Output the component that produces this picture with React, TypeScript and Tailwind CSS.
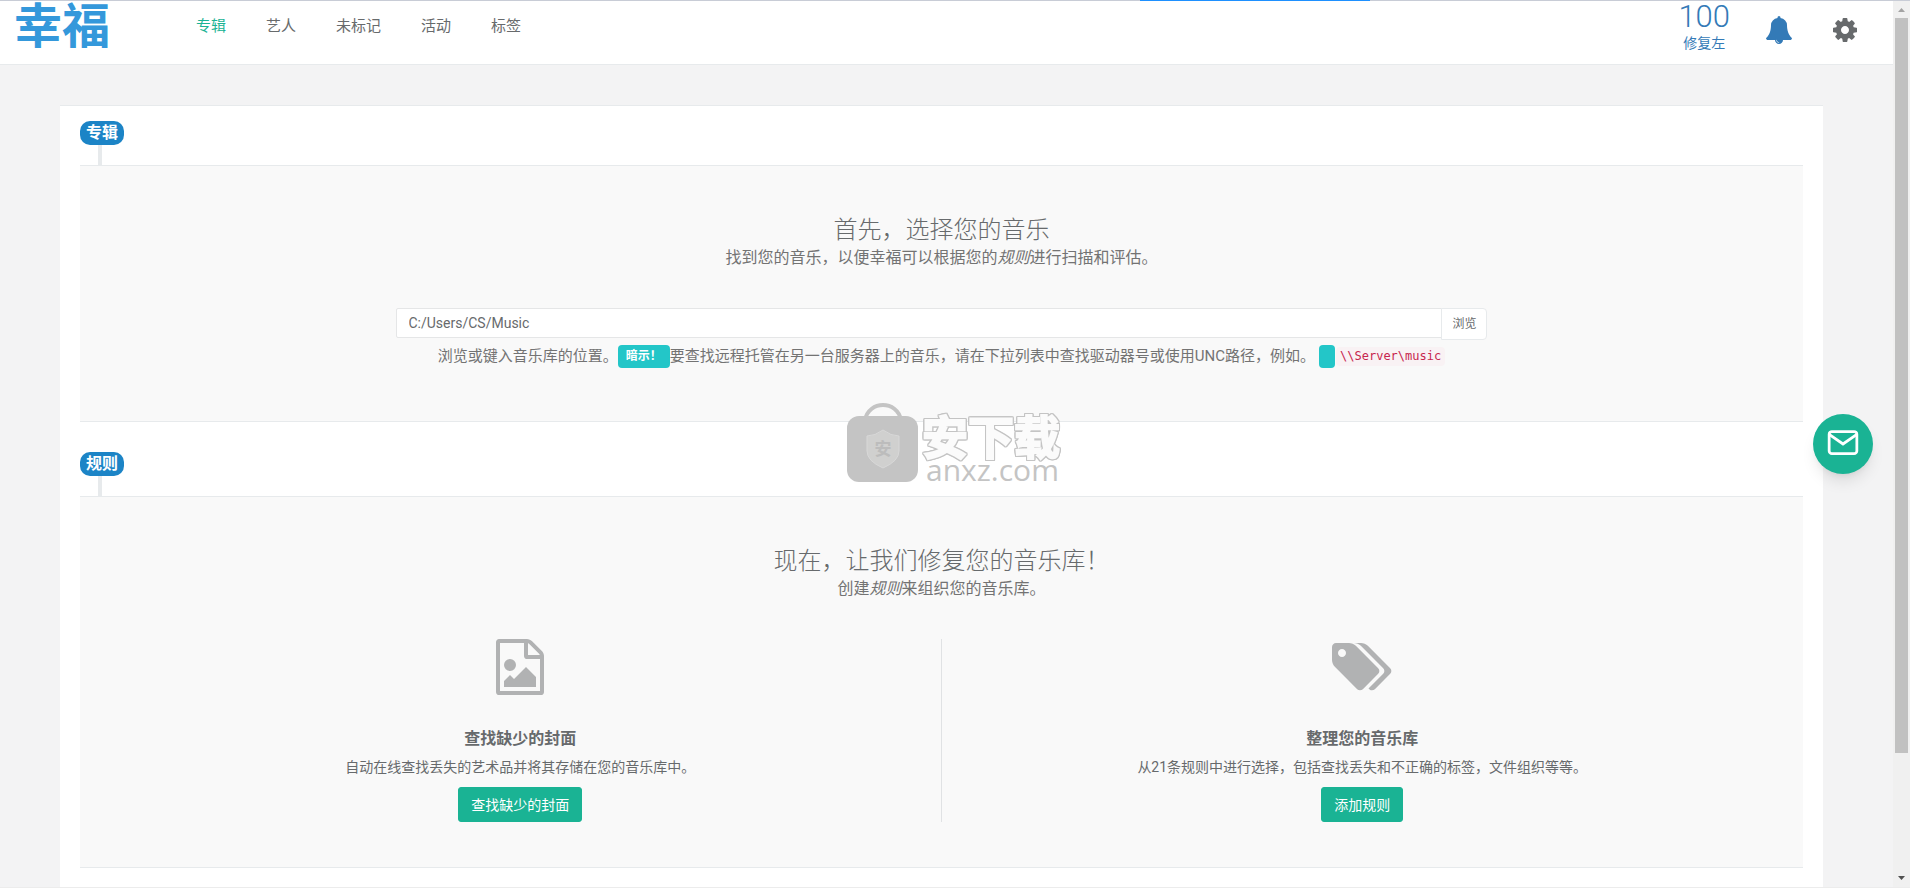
import type { ReactNode } from "react";
import clsx from "clsx";

const NAV = ["专辑", "艺人", "未标记", "活动", "标签"];

function BellIcon() {
  return (
    <svg viewBox="0 0 1792 1792" className="size-7" fill="currentColor" aria-hidden>
      <path d="M912 1696q0-16-16-16-59 0-101.5-42.5t-42.5-101.5q0-16-16-16t-16 16q0 73 51.5 124.5t124.5 51.5q16 0 16-16zm816-288q0 52-38 90t-90 38h-448q0 106-75 181t-181 75-181-75-75-181h-448q-52 0-90-38t-38-90q50-42 91-88t85-119.5 74.5-158.5 50-206 19.5-260q0-152 117-282.5t307-158.5q-8-19-8-39 0-40 28-68t68-28 68 28 28 68q0 20-8 39 190 28 307 158.5t117 282.5q0 139 19.5 260t50 206 74.5 158.5 85 119.5 91 88z" />
    </svg>
  );
}

function CogIcon() {
  return (
    <svg viewBox="0 0 1792 1792" className="size-7" fill="currentColor" aria-hidden>
      <path d="M1152 896q0-106-75-181t-181-75-181 75-75 181 75 181 181 75 181-75 75-181zm512-109v222q0 12-8 23t-20 13l-185 28q-19 54-39 91 35 50 107 138 10 12 10 25t-9 23q-27 37-99 108t-94 71q-12 0-26-9l-138-108q-44 23-91 38-16 136-29 186-7 28-36 28h-222q-14 0-24.5-8.5t-11.5-21.5l-28-184q-49-16-90-37l-141 107q-10 9-25 9-14 0-25-11-126-114-165-168-7-10-7-23 0-12 8-23 15-21 51-66.5t54-70.5q-27-50-41-99l-183-27q-13-2-21-12.5t-8-23.5v-222q0-12 8-23t19-13l186-28q14-46 39-92-40-57-107-138-10-12-10-24 0-10 9-23 26-36 98.5-107.5t94.5-71.5q13 0 26 10l138 107q44-23 91-38 16-136 29-186 7-28 36-28h222q14 0 24.5 8.5t11.5 21.5l28 184q49 16 90 37l142-107q9-9 24-9 13 0 25 10 129 119 165 170 7 8 7 22 0 12-8 23-15 21-51 66.5t-54 70.5q26 50 41 98l183 28q13 2 21 12.5t8 23.5z" />
    </svg>
  );
}

function FileImageIcon() {
  return (
    <svg viewBox="128 0 1536 1792" className="h-14 w-12" fill="currentColor" aria-hidden>
      <path d="M1596 380q28 28 48 76t20 88v1152q0 40-28 68t-68 28h-1344q-40 0-68-28t-28-68v-1600q0-40 28-68t68-28h896q40 0 88 20t76 48zm-444-244v376h376q-10-29-22-41l-313-313q-12-12-41-22zm384 1528v-1024h-416q-40 0-68-28t-28-68v-416h-768v1536h1280zm-128-448v320h-1024v-192l192-192 128 128 384-384zm-832-192q-80 0-136-56t-56-136 56-136 136-56 136 56 56 136-56 136-136 56z" />
    </svg>
  );
}

function TagsIcon() {
  return (
    <svg viewBox="128 0 1920 1792" className="h-14 w-15" fill="currentColor" aria-hidden>
      <path d="M576 448q0-53-37.5-90.5t-90.5-37.5-90.5 37.5-37.5 90.5 37.5 90.5 90.5 37.5 90.5-37.5 37.5-90.5zm1067 576q0 53-37 90l-491 492q-39 37-91 37-53 0-90-37l-715-716q-38-37-64.5-101t-26.5-117v-416q0-52 38-90t90-38h416q53 0 117 26.5t102 64.5l715 714q37 39 37 91zm384 0q0 53-37 90l-491 492q-39 37-91 37-36 0-59-14t-53-45l470-470q37-37 37-90 0-52-37-91l-715-714q-38-38-102-64.5t-117-26.5h224q53 0 117 26.5t102 64.5l715 714q37 39 37 91z" />
    </svg>
  );
}

const ACTIONS = [
  {
    Icon: FileImageIcon,
    title: "查找缺少的封面",
    description: "自动在线查找丢失的艺术品并将其存储在您的音乐库中。",
    button: "查找缺少的封面",
  },
  {
    Icon: TagsIcon,
    title: "整理您的音乐库",
    description: "从21条规则中进行选择，包括查找丢失和不正确的标签，文件组织等等。",
    button: "添加规则",
  },
];

function Header() {
  return (
    <header className="flex h-16 shrink-0 items-start border-b border-[#e7eaec] bg-white">
      <a href="#home" className="ml-[14px] w-[162px] text-[48px] leading-[52px] font-bold text-[#3498db]">
        幸福
      </a>
      <nav className="flex text-[15px] leading-5">
        {NAV.map((item, i) => (
          <a key={item} href={`#${item}`} className={clsx("px-5 pt-[15px]", i === 0 && "text-[#1ab394]")}>
            {item}
          </a>
        ))}
      </nav>
      <div className="ml-auto flex items-start pr-[34px] text-[#337ab7]">
        <a href="#fixes" className="flex flex-col items-center">
          <span className="text-[31px] leading-8 font-light">100</span>
          <span className="text-sm leading-5">修复左</span>
        </a>
        <button type="button" aria-label="通知" className="mt-[15px] ml-[35px]">
          <BellIcon />
        </button>
        <button type="button" aria-label="设置" className="mt-[15px] ml-[38px] text-[#676a6c]">
          <CogIcon />
        </button>
      </div>
    </header>
  );
}

function Step({ label, title, lead, children }: { label: string; title: string; lead: ReactNode; children: ReactNode }) {
  return (
    <section>
      <h2 className="w-fit rounded-[10px] bg-[#1c84c6] px-[6px] text-base leading-6 font-bold text-white">{label}</h2>
      <div className="ml-[18px] h-5 w-1 bg-[#e7eaec]" />
      <div className="border-y border-[#e7eaec] bg-[#f9f9f9] px-5 pt-[50px] pb-[45px] text-center">
        <h3 className="text-2xl leading-7 font-light">{title}</h3>
        <p className="text-base leading-7 text-[#737373]">{lead}</p>
        {children}
      </div>
    </section>
  );
}

function LibraryPicker() {
  return (
    <div className="mx-auto mt-9 w-2/3 px-[15px] pb-2">
      <div className="flex items-start">
        <input
          id="library"
          type="text"
          defaultValue="C:/Users/CS/Music"
          className="h-[30px] min-w-0 flex-1 rounded-l-xs border border-[#e5e6e7] bg-white px-3 text-sm outline-none"
        />
        <button
          type="button"
          className="-ml-px h-8 rounded-r-sm border border-[#e7eaec] bg-white px-[10px] text-xs"
        >
          浏览
        </button>
      </div>
      <p className="mt-1 flex h-6 items-center justify-center text-[15px] whitespace-nowrap text-[#737373]">
        <label htmlFor="library">浏览或键入音乐库的位置。</label>
        <span className="h-[23px] rounded-sm bg-[#23c6c8] px-2 text-xs leading-[23px] font-bold text-white">暗示！</span>
        要查找远程托管在另一台服务器上的音乐，请在下拉列表中查找驱动器号或使用UNC路径，例如。
        <span className="ml-1 h-[23px] w-4 rounded-sm bg-[#23c6c8]" />
        <code className="ml-px rounded-sm bg-[#f9f2f4] px-1 font-['DejaVu_Sans_Mono',monospace] text-xs leading-[19px] text-[#c7254e]">
          \\Server\music
        </code>
      </p>
    </div>
  );
}

function Actions() {
  return (
    <div className="mt-9 grid grid-cols-2 divide-x divide-[#e0e2e4]">
      {ACTIONS.map(({ Icon, title, description, button }) => (
        <div key={title} className="flex flex-col items-center">
          <span className="text-[#b1b2b3]">
            <Icon />
          </span>
          <h4 className="mt-8 text-base leading-6 font-bold">{title}</h4>
          <p className="mt-1 text-sm leading-6">{description}</p>
          <button
            type="button"
            className="mt-2 h-[35px] rounded-[3px] border border-[#1ab394] bg-[#1ab394] px-3 text-sm text-white"
          >
            {button}
          </button>
        </div>
      ))}
    </div>
  );
}

function Watermark() {
  return (
    <div className="pointer-events-none absolute top-[402px] left-[847px] flex text-[#c4c4c4]">
      <svg viewBox="0 0 71 80" className="h-20 w-[71px]" aria-hidden>
        <path d="M18 18C22 -2 50 -2 54 18" fill="none" stroke="currentColor" strokeWidth="4" />
        <rect y="14" width="71" height="66" rx="12" fill="currentColor" />
        <path d="M36 28q8 6 16 6v15q0 10-16 17-16-7-16-17V34q8 0 16-6z" fill="#d0d0cf" stroke="#d8d8d8" />
        <text x="36" y="53" textAnchor="middle" fontSize="17" fontWeight="bold" fill="#bcbcbc">
          安
        </text>
      </svg>
      <div className="ml-1 pt-3">
        <p className="text-[46px] leading-[48px] font-bold text-[#fbfbfb] [-webkit-text-stroke:2px_#fbfbfb] [filter:drop-shadow(1px_0_#c4c4c4)_drop-shadow(-1px_0_#c4c4c4)_drop-shadow(0_1px_#c4c4c4)_drop-shadow(0_-1px_#c4c4c4)]">
          安下载
        </p>
        <p className="pl-1 font-['Open_Sans',sans-serif] text-[30px] leading-4 font-medium">anxz.com</p>
      </div>
    </div>
  );
}

// Classic desktop scrollbar track
function Scrollbar() {
  return (
    <div className="flex w-[17px] shrink-0 flex-col items-center bg-[#f0f0f0]" aria-hidden>
      <svg viewBox="0 0 17 17" className="size-[17px]">
        <path d="M5 11h7L8.500 7z" fill="#a3a3a3" />
      </svg>
      <div className="h-[83%] w-[13px] bg-[#c1c1c1]" />
      <svg viewBox="0 0 17 17" className="mt-auto size-[17px]">
        <path d="M5 6h7L8.500 10z" fill="#505050" />
      </svg>
    </div>
  );
}

export default function App() {
  return (
    <div className="relative flex h-screen flex-col overflow-hidden border-b border-[#ececec] bg-[#f3f3f4] font-[Roboto,'Noto_Sans_CJK_SC',sans-serif] text-[#676a6c]">
      <div className="flex h-px shrink-0 bg-[#c8ccd6]">
        <div className="ml-[1140px] w-[230px] bg-[#1e90ff]" />
      </div>
      <div className="flex min-h-0 flex-1">
        <div className="flex min-w-0 flex-1 flex-col overflow-hidden">
          <Header />
          <main className="mt-10 mr-[70px] ml-[60px] flex-1 border-t border-[#e7eaec] bg-white px-5 pt-[15px]">
            <Step
              label="专辑"
              title="首先，选择您的音乐"
              lead={
                <>
                  找到您的音乐，以便幸福可以根据您的<em>规则</em>进行扫描和评估。
                </>
              }
            >
              <LibraryPicker />
            </Step>
            <div className="h-[30px]" />
            <Step
              label="规则"
              title="现在，让我们修复您的音乐库！"
              lead={
                <>
                  创建<em>规则</em>来组织您的音乐库。
                </>
              }
            >
              <Actions />
            </Step>
          </main>
        </div>
        <Scrollbar />
      </div>
      <Watermark />
      <button
        type="button"
        aria-label="发送邮件"
        className="absolute top-[414px] right-[37px] flex size-15 items-center justify-center rounded-full bg-[#1ab394] text-white shadow-lg"
      >
        <svg viewBox="0 0 24 26" className="size-9" fill="none" stroke="currentColor" strokeWidth="2" aria-hidden>
          <rect x="2" y="4" width="20" height="16" rx="2" />
          <path d="M22 6l-10 7L2 6" />
        </svg>
      </button>
    </div>
  );
}
